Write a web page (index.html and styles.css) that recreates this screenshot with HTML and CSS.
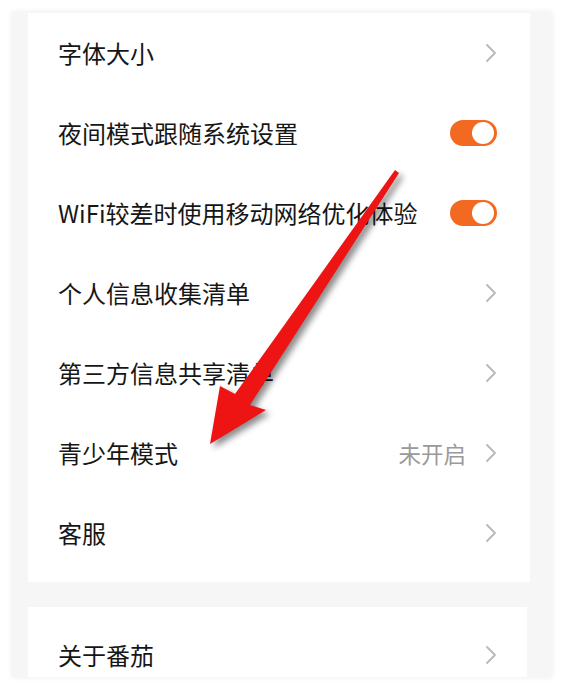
FILE: index.html
```html
<!DOCTYPE html>
<html lang="zh-CN">
<head>
<meta charset="utf-8">
<title>设置</title>
<link rel="stylesheet" href="styles.css">
</head>
<body>
<div class="frame">
  <div class="card card-main">
    <div class="row"><span class="label">字体大小</span><span class="right"><svg class="chev" viewBox="0 0 12 20" width="12" height="20"><polyline points="2,2 10,10 2,18"/></svg></span></div>
    <div class="row"><span class="label">夜间模式跟随系统设置</span><span class="right"><span class="toggle"><span class="knob"></span></span></span></div>
    <div class="row"><span class="label">WiFi较差时使用移动网络优化体验</span><span class="right"><span class="toggle"><span class="knob"></span></span></span></div>
    <div class="row"><span class="label">个人信息收集清单</span><span class="right"><svg class="chev" viewBox="0 0 12 20" width="12" height="20"><polyline points="2,2 10,10 2,18"/></svg></span></div>
    <div class="row"><span class="label">第三方信息共享清单</span><span class="right"><svg class="chev" viewBox="0 0 12 20" width="12" height="20"><polyline points="2,2 10,10 2,18"/></svg></span></div>
    <div class="row"><span class="label">青少年模式</span><span class="right"><span class="value">未开启</span><svg class="chev" viewBox="0 0 12 20" width="12" height="20"><polyline points="2,2 10,10 2,18"/></svg></span></div>
    <div class="row"><span class="label">客服</span><span class="right"><svg class="chev" viewBox="0 0 12 20" width="12" height="20"><polyline points="2,2 10,10 2,18"/></svg></span></div>
  </div>
  <div class="card card-second">
    <div class="row"><span class="label">关于番茄</span><span class="right"><svg class="chev" viewBox="0 0 12 20" width="12" height="20"><polyline points="2,2 10,10 2,18"/></svg></span></div>
  </div>
</div>
<svg class="arrow" viewBox="0 0 564 691" width="564" height="691">
  <polygon points="210,444 220,386 235,394 395,170 399,173 250,405 266,410"/>
</svg>
</body>
</html>
```
FILE: styles.css
```css
html, body {
  margin: 0;
  padding: 0;
  background: #ffffff;
}
body {
  width: 564px;
  height: 691px;
  position: relative;
  overflow: hidden;
  font-family: "Noto Sans CJK SC", "Noto Sans", sans-serif;
}
.frame {
  margin: 12px 0 0 12px;
  width: 540px;
  height: 665px;
  background: #f6f6f6;
  box-shadow: 0 0 6px rgba(0, 0, 0, 0.08);
  overflow: hidden;
  box-sizing: border-box;
  padding: 1px 22px 0 16px;
  display: flex;
  flex-direction: column;
  gap: 25px;
}
.card {
  background: #ffffff;
  flex-shrink: 0;
}
.card-main {
  padding: 0 0 9px;
}
.card-second {
  padding-top: 8px;
  margin-right: 3px;
}
.row {
  height: 80px;
  display: flex;
  align-items: center;
  justify-content: space-between;
  padding: 0 33px 0 30px;
}
.card-second .row {
  padding-right: 30px;
}
.label {
  font-size: 24px;
  color: #161616;
  line-height: 1;
  white-space: nowrap;
}
.right {
  display: flex;
  align-items: center;
  gap: 19px;
}
.value {
  font-size: 22.5px;
  color: #9a9a9a;
  line-height: 1;
}
.chev {
  display: block;
  fill: none;
  stroke: #b8b8b8;
  stroke-width: 1.8;
  stroke-linecap: round;
  stroke-linejoin: round;
}
.toggle {
  width: 47px;
  height: 26px;
  border-radius: 13px;
  background: #f26a22;
  position: relative;
  display: block;
}
.knob {
  position: absolute;
  right: 3px;
  top: 2px;
  width: 22px;
  height: 22px;
  border-radius: 50%;
  background: #ffffff;
}
.arrow {
  position: absolute;
  left: 0;
  top: 0;
  pointer-events: none;
  fill: #ee1414;
  filter: drop-shadow(4px 4px 3px rgba(0, 0, 0, 0.45));
}
```
